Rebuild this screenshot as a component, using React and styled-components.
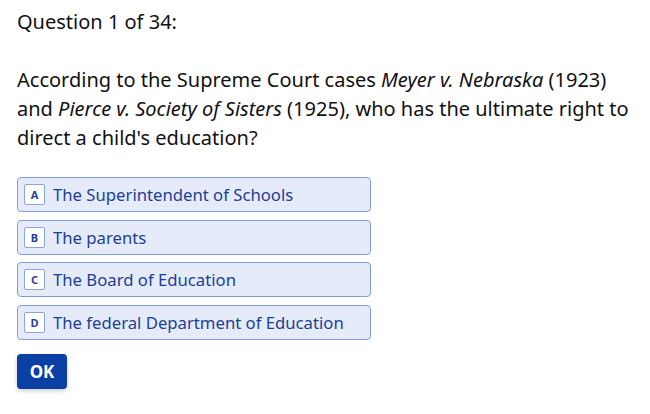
import styled, { createGlobalStyle } from "styled-components"

const GlobalStyle = createGlobalStyle`
  html, body {
    margin: 0;
    padding: 0;
    background: #ffffff;
  }
  body {
    font-family: "Noto Sans", "Open Sans", sans-serif;
  }
`

const Page = styled.div`
  padding: 8px 17px;
  width: 625px;
`

const Counter = styled.div`
  font-size: 20px;
  line-height: 28px;
  color: #111111;
`

const Prompt = styled.p`
  margin: 29px 0 0;
  font-size: 20px;
  line-height: 29px;
  color: #111111;
`

const Choices = styled.div`
  display: flex;
  flex-direction: column;
  gap: 7.5px;
  margin-top: 25px;
  width: 354px;
`

const Choice = styled.button`
  display: flex;
  align-items: center;
  gap: 8px;
  height: 35px;
  padding: 0 6px;
  background: #e5ebf8;
  border: 1px solid #7d9fd6;
  border-radius: 4px;
  font-family: inherit;
  font-size: 16.7px;
  color: #1c3f98;
  text-align: left;
  cursor: pointer;
`

const Key = styled.span`
  display: flex;
  align-items: center;
  justify-content: center;
  width: 19px;
  height: 19px;
  background: #ffffff;
  border: 1px solid #8aa6d8;
  border-radius: 2px;
  font-size: 11px;
  font-weight: 700;
  color: #1c3f98;
`

const OkButton = styled.button`
  margin-top: 14px;
  width: 50px;
  height: 35px;
  background: #0a3fa6;
  border: none;
  border-radius: 4px;
  box-shadow: 0 2px 4px rgba(0, 0, 0, 0.2);
  font-family: inherit;
  font-size: 17px;
  font-weight: 700;
  color: #ffffff;
  cursor: pointer;
`

const choices = [
  ["A", "The Superintendent of Schools"],
  ["B", "The parents"],
  ["C", "The Board of Education"],
  ["D", "The federal Department of Education"],
]

export default function App() {
  return (
    <>
      <GlobalStyle />
      <Page>
        <Counter>Question 1 of 34:</Counter>
        <Prompt>
          According to the Supreme Court cases <i>Meyer v. Nebraska</i> (1923)
          and <i>Pierce v. Society of Sisters</i> (1925), who has the ultimate
          right to direct a child's education?
        </Prompt>
        <Choices>
          {choices.map(([key, label]) => (
            <Choice key={key}>
              <Key>{key}</Key>
              {label}
            </Choice>
          ))}
        </Choices>
        <OkButton>OK</OkButton>
      </Page>
    </>
  )
}
